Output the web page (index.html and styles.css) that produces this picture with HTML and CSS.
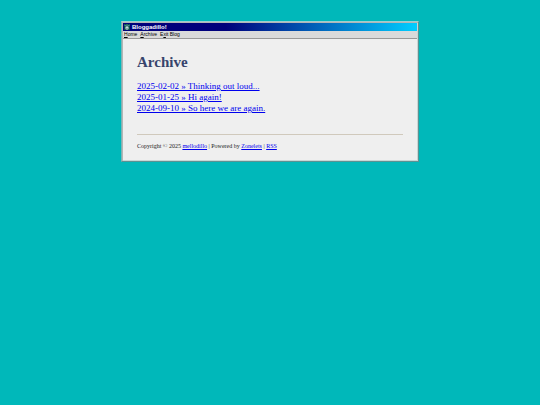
FILE: index.html
```html
<!DOCTYPE html>
<html lang="en">
<head>
    <meta charset="UTF-8">
    <meta name="viewport" content="width=device-width, initial-scale=1.0">
    <title>Bloggadillo!</title>
    <link rel="stylesheet" href="styles.css">
</head>
<body>

    <div class="window">
        <header class="title-bar">
            <svg class="title-icon" viewBox="0 0 16 16" aria-hidden="true">
                <rect width="16" height="16" fill="#064a4c"/>
                <path d="M1 3l5 3M15 3l-5 3M8 1v5" stroke="#7fc4bd" stroke-width="2"/>
                <path d="M4 8l4-2 4 2v5l-2 2H6l-2-2z" fill="#d5ebe6"/>
                <path d="M8 10v5" stroke="#064a4c" stroke-width="2"/>
            </svg>
            <span>Bloggadillo!</span>
        </header>
        <nav class="menu">
            <a href="#"><u>H</u>ome</a>
            <a href="#"><u>A</u>rchive</a>
            <a href="#">E<u>x</u>it Blog</a>
        </nav>
        <main class="content">
            <h1>Archive</h1>
            <ul class="post-list">
                <li><a href="#">2025-02-02 » Thinking out loud...</a></li>
                <li><a href="#">2025-01-25 » Hi again!</a></li>
                <li><a href="#">2024-09-10 » So here we are again.</a></li>
            </ul>
            <footer>
                <p>Copyright © 2025 <a href="#">mellodillo</a> | Powered by <a href="#">Zonelets</a> | <a href="#">RSS</a></p>
            </footer>
        </main>
    </div>

</body>
</html>
```
FILE: styles.css
```css
* {
    box-sizing: border-box;
}
body {
    margin: 0;
    padding: 21px 0;
    background-color: #00b8ba;
    font-family: "Liberation Serif", "Times New Roman", serif;
}
.window {
    width: 56%;
    max-width: 298px;
    margin: 0 auto;
    border: 1px solid;
    border-color: #9ccfd0 #5b9293 #5b9293 #7fb5b6;
    box-shadow: inset 1px 1px #b5b5b5, inset -1px -1px #c9d6d5;
    background-color: #efefef;
    padding: 1px;
}
.title-bar {
    display: flex;
    align-items: center;
    gap: 2px;
    height: 8px;
    padding-left: 1px;
    background: linear-gradient(to right, #00007b 35%, #00ceff);
    color: #fff;
    font: bold 6px/8px "Liberation Sans", Arial, sans-serif;
}
.title-icon {
    width: 6px;
    height: 6px;
    fill: none;
}
.menu {
    display: flex;
    gap: 3px;
    height: 8px;
    padding-left: 1px;
    background-color: #dadada;
    border-bottom: 1px solid #999;
    font: 5px/7px "Liberation Sans", Arial, sans-serif;

    & a {
        color: #000;
        text-decoration: none;
    }
}
.content {
    padding: 15px 14px 10px;
}
h1 {
    margin: 0 0 10px;
    color: #36446c;
    font-size: 15px;
    line-height: 17px;
}
.post-list {
    margin: 0 0 20px;
    padding: 0;
    list-style: none;
    font-size: 9px;
    line-height: 11px;
}
.content a {
    color: #0000ee;
}
footer {
    border-top: 1px solid #d0c9bc;
    padding-top: 7px;
    color: #222;
    font-size: 6px;
    line-height: 8px;

    & p {
        margin: 0;
    }
}
```
